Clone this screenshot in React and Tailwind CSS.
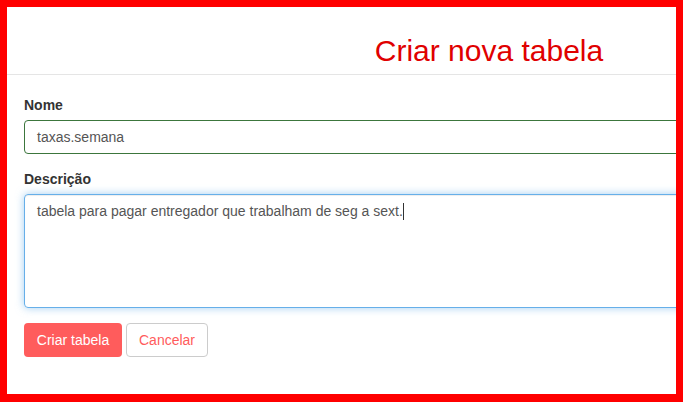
export default function App() {
  return (
    <div
      className="w-[683px] h-[402px] bg-[#ff0000] pt-[7px] pl-[7px] pr-[7px] pb-[8px]"
      style={{ fontFamily: '"Liberation Sans", Arial, sans-serif' }}
    >
      <div className="w-full h-full bg-white overflow-hidden">
        <div className="w-[964px]">
          <div className="h-[68px] border-b border-[#e5e5e5] flex items-end justify-center pb-[7px]">
            <h1 className="text-[30px] leading-[33px] text-[#e00000] font-normal">Criar nova tabela</h1>
          </div>
          <div className="px-[17px] pt-[20px]">
            <div className="mb-[15px]">
              <label className="block text-[14px] leading-[20px] font-bold text-[#333] mb-[5px]">Nome</label>
              <div className="h-[34px] border border-[#3c763d] rounded-[4px] px-[12px] flex items-center text-[14px] text-[#555]">
                taxas.semana
              </div>
            </div>
            <div className="mb-[15px]">
              <label className="block text-[14px] leading-[20px] font-bold text-[#333] mb-[5px]">Descrição</label>
              <div className="h-[114px] border border-[#66afe9] rounded-[4px] px-[12px] py-[6px] text-[14px] leading-[20px] text-[#555] shadow-[inset_0_1px_1px_rgba(0,0,0,0.075),0_0_8px_rgba(102,175,233,0.6)]">
                tabela para pagar entregador que trabalham de seg a sext.
                <span className="inline-block w-[1px] h-[17px] bg-[#333] align-[-4px]"></span>
              </div>
            </div>
            <div className="flex gap-[4px]">
              <button className="h-[34px] w-[98px] rounded-[4px] bg-[#ff5c5c] text-white text-[14px]">Criar tabela</button>
              <button className="h-[34px] w-[82px] rounded-[4px] bg-white border border-[#ccc] text-[#ff5c5c] text-[14px]">Cancelar</button>
            </div>
          </div>
        </div>
      </div>
    </div>
  );
}
